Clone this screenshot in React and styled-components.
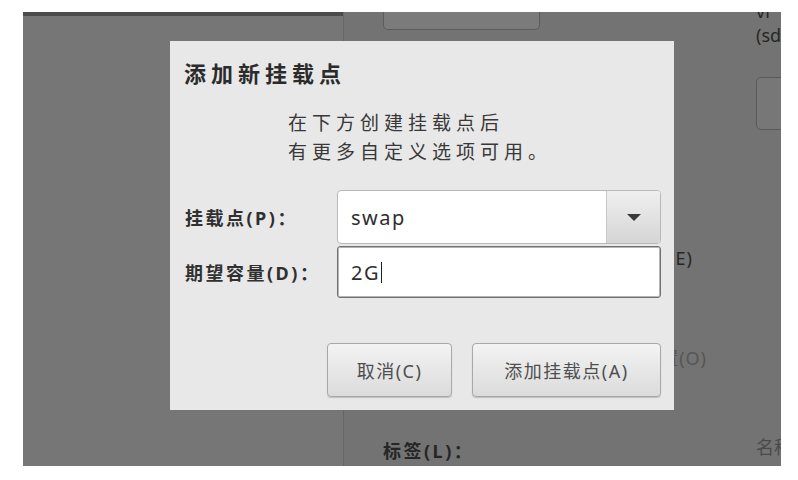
import React from 'react';
import styled, { createGlobalStyle } from 'styled-components';

const Global = createGlobalStyle`
  html, body { margin: 0; padding: 0; background: #ffffff; }
  body { font-family: "Noto Sans", "Noto Sans CJK SC", sans-serif; }
`;

const Page = styled.div`
  width: 798px;
  height: 480px;
  box-sizing: border-box;
  padding: 12px 17px 14px 23px;
  overflow: hidden;
`;

const Screen = styled.div`
  position: relative;
  display: flex;
  height: 100%;
  overflow: hidden;
`;

const LeftPanel = styled.div`
  width: 320px;
  flex: none;
  background: #767676;
  display: flex;
  flex-direction: column;
`;

const LeftTopBar = styled.div`
  height: 4px;
  background: #4b4b4b;
`;

const Divider = styled.div`
  width: 1px;
  flex: none;
  background: #676767;
`;

const RightPanel = styled.div`
  flex: 1;
  background: #737373;
  display: grid;
  grid-template-columns: 412px 1fr;
  overflow: hidden;
`;

const MainCol = styled.div`
  display: flex;
  flex-direction: column;
  align-items: flex-start;
`;

const SideCol = styled.div`
  display: flex;
  flex-direction: column;
  overflow: hidden;
  white-space: nowrap;
`;

const TopButton = styled.div`
  margin-left: 39px;
  width: 157px;
  height: 18px;
  box-sizing: border-box;
  border: 1px solid #5c5c5c;
  border-top: none;
  border-radius: 0 0 5px 5px;
  background: #7b7b7b;
`;

const BgText = styled.div`
  font-size: 18px;
  line-height: 24px;
  white-space: nowrap;
  color: ${(p) => p.$color || '#262626'};
  font-weight: ${(p) => (p.$bold ? 700 : 400)};
  letter-spacing: ${(p) => p.$spacing || '1px'};
  margin-top: ${(p) => p.$top || '0px'};
  margin-left: ${(p) => p.$left || '0px'};
  padding-right: ${(p) => p.$right || '0px'};
  align-self: ${(p) => (p.$right ? 'stretch' : 'auto')};
  text-align: ${(p) => (p.$right ? 'right' : 'left')};
`;

const SideText = styled.div`
  font-size: 18px;
  line-height: 22px;
  color: ${(p) => p.$color || '#262626'};
  margin-top: ${(p) => p.$top || '0px'};
`;

const SideButton = styled.div`
  margin-top: 31px;
  height: 53px;
  width: 60px;
  box-sizing: border-box;
  border: 1px solid #5a5a5a;
  border-radius: 5px;
  background: #777777;
`;

const Dialog = styled.div`
  position: absolute;
  left: 147px;
  top: 29px;
  width: 504px;
  height: 369px;
  box-sizing: border-box;
  background: #e8e8e8;
  padding: 17px 13px 13px 14px;
  display: flex;
  flex-direction: column;
`;

const Title = styled.h1`
  margin: 0;
  font-size: 22px;
  line-height: 30px;
  font-weight: 700;
  letter-spacing: 5px;
  color: #2b2b2b;
`;

const Description = styled.p`
  margin: 21px 0 0 104px;
  font-size: 19px;
  line-height: 28.5px;
  letter-spacing: 5px;
  color: #383838;
`;

const Form = styled.div`
  margin-top: 24px;
  display: grid;
  grid-template-columns: 153px 1fr;
  row-gap: 2px;
  align-items: center;
`;

const Label = styled.label`
  padding-left: 1px;
  font-size: 18px;
  font-weight: 700;
  letter-spacing: 2.5px;
  color: #303030;
  white-space: nowrap;
`;

const Combo = styled.div`
  display: flex;
  height: 54px;
  box-sizing: border-box;
  border: 1px solid #b8b8b8;
  border-radius: 4px;
  background: #ffffff;
  overflow: hidden;
`;

const FieldText = styled.div`
  flex: 1;
  display: flex;
  align-items: center;
  padding-left: 13px;
  font-size: 20px;
  letter-spacing: 1.5px;
  color: #2e2e2e;
`;

const ComboButton = styled.div`
  width: 53px;
  flex: none;
  border-left: 1px solid #c8c8c8;
  background: linear-gradient(#efefef, #d5d5d5);
  display: flex;
  align-items: center;
  justify-content: center;
`;

const Entry = styled.div`
  display: flex;
  height: 52px;
  box-sizing: border-box;
  border: 1px solid #727272;
  border-radius: 3px;
  background: #ffffff;
  box-shadow: inset 0 0 0 1px #b4b4b4;
`;

const Caret = styled.span`
  display: inline-block;
  width: 1px;
  height: 21px;
  margin-left: 1px;
  background: #1e1e1e;
`;

const ButtonRow = styled.div`
  margin-top: auto;
  display: flex;
  justify-content: flex-end;
  gap: 20px;
`;

const Button = styled.button`
  width: ${(p) => p.$width}px;
  height: 54px;
  box-sizing: border-box;
  border: 1px solid #a8a8a8;
  border-radius: 4px;
  background: linear-gradient(#f3f3f3, #dbdbdb);
  box-shadow: 0 1px 1px rgba(0, 0, 0, 0.18);
  font-family: "Noto Sans", "Noto Sans CJK SC", sans-serif;
  font-size: 18px;
  letter-spacing: 1.5px;
  color: #4e4e4e;
  padding: 0;
`;

export default function App() {
  return (
    <>
      <Global />
      <Page>
        <Screen>
          <LeftPanel>
            <LeftTopBar />
          </LeftPanel>
          <Divider />
          <RightPanel>
            <MainCol>
              <TopButton />
              <BgText $top="216px" $right="63px">加密(E)</BgText>
              <BgText $top="76px" $right="49px" $color="#565656">设置(O)</BgText>
              <BgText $top="69px" $left="39px" $bold $spacing="2.5px">标签(L)：</BgText>
            </MainCol>
            <SideCol>
              <SideText $top="-12px">vi</SideText>
              <SideText $top="2px">(sda)</SideText>
              <SideButton />
              <SideText $top="306px" $color="#4a4a4a">名称</SideText>
            </SideCol>
          </RightPanel>

          <Dialog>
            <Title>添加新挂载点</Title>
            <Description>
              在下方创建挂载点后
              <br />
              有更多自定义选项可用。
            </Description>
            <Form>
              <Label>挂载点(P)：</Label>
              <Combo>
                <FieldText>swap</FieldText>
                <ComboButton>
                  <svg width="14" height="7" viewBox="0 0 14 7">
                    <polygon points="0,0 14,0 7,7" fill="#3a3a3a" />
                  </svg>
                </ComboButton>
              </Combo>
              <Label>期望容量(D)：</Label>
              <Entry>
                <FieldText>
                  2G
                  <Caret />
                </FieldText>
              </Entry>
            </Form>
            <ButtonRow>
              <Button $width={125}>取消(C)</Button>
              <Button $width={189}>添加挂载点(A)</Button>
            </ButtonRow>
          </Dialog>
        </Screen>
      </Page>
    </>
  );
}
